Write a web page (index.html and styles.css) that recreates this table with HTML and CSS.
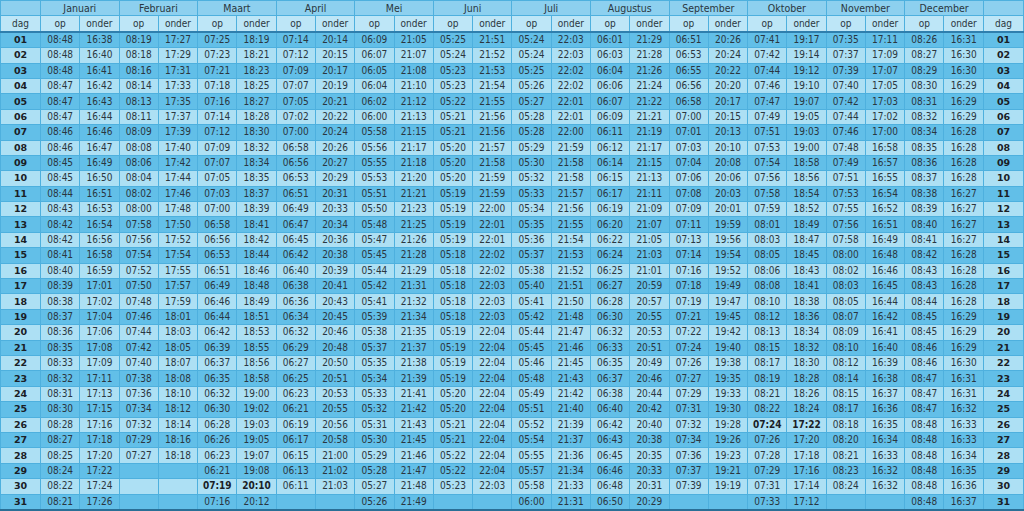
FILE: index.html
```html
<!DOCTYPE html>
<html lang="nl">
<head>
<meta charset="utf-8">
<title>Zonsopkomst en zonsondergang</title>
<link rel="stylesheet" href="styles.css">
</head>
<body>
<table class="sun">
<colgroup><col class="c-dag"><col span="24"><col class="c-dag"></colgroup>
<thead>
<tr class="months"><th></th><th colspan="2">Januari</th><th colspan="2">Februari</th><th colspan="2">Maart</th><th colspan="2">April</th><th colspan="2">Mei</th><th colspan="2">Juni</th><th colspan="2">Juli</th><th colspan="2">Augustus</th><th colspan="2">September</th><th colspan="2">Oktober</th><th colspan="2">November</th><th colspan="2">December</th><th></th></tr>
<tr class="sub"><th>dag</th><th>op</th><th>onder</th><th>op</th><th>onder</th><th>op</th><th>onder</th><th>op</th><th>onder</th><th>op</th><th>onder</th><th>op</th><th>onder</th><th>op</th><th>onder</th><th>op</th><th>onder</th><th>op</th><th>onder</th><th>op</th><th>onder</th><th>op</th><th>onder</th><th>op</th><th>onder</th><th>dag</th></tr>
</thead>
<tbody>
<tr><th>01</th><td>08:48</td><td>16:38</td><td>08:19</td><td>17:27</td><td>07:25</td><td>18:19</td><td>07:14</td><td>20:14</td><td>06:09</td><td>21:05</td><td>05:25</td><td>21:51</td><td>05:24</td><td>22:03</td><td>06:01</td><td>21:29</td><td>06:51</td><td>20:26</td><td>07:41</td><td>19:17</td><td>07:35</td><td>17:11</td><td>08:26</td><td>16:31</td><th>01</th></tr>
<tr><th>02</th><td>08:48</td><td>16:40</td><td>08:18</td><td>17:29</td><td>07:23</td><td>18:21</td><td>07:12</td><td>20:15</td><td>06:07</td><td>21:07</td><td>05:24</td><td>21:52</td><td>05:24</td><td>22:03</td><td>06:03</td><td>21:28</td><td>06:53</td><td>20:24</td><td>07:42</td><td>19:14</td><td>07:37</td><td>17:09</td><td>08:27</td><td>16:30</td><th>02</th></tr>
<tr><th>03</th><td>08:48</td><td>16:41</td><td>08:16</td><td>17:31</td><td>07:21</td><td>18:23</td><td>07:09</td><td>20:17</td><td>06:05</td><td>21:08</td><td>05:23</td><td>21:53</td><td>05:25</td><td>22:02</td><td>06:04</td><td>21:26</td><td>06:55</td><td>20:22</td><td>07:44</td><td>19:12</td><td>07:39</td><td>17:07</td><td>08:29</td><td>16:30</td><th>03</th></tr>
<tr><th>04</th><td>08:47</td><td>16:42</td><td>08:14</td><td>17:33</td><td>07:18</td><td>18:25</td><td>07:07</td><td>20:19</td><td>06:04</td><td>21:10</td><td>05:23</td><td>21:54</td><td>05:26</td><td>22:02</td><td>06:06</td><td>21:24</td><td>06:56</td><td>20:20</td><td>07:46</td><td>19:10</td><td>07:40</td><td>17:05</td><td>08:30</td><td>16:29</td><th>04</th></tr>
<tr><th>05</th><td>08:47</td><td>16:43</td><td>08:13</td><td>17:35</td><td>07:16</td><td>18:27</td><td>07:05</td><td>20:21</td><td>06:02</td><td>21:12</td><td>05:22</td><td>21:55</td><td>05:27</td><td>22:01</td><td>06:07</td><td>21:22</td><td>06:58</td><td>20:17</td><td>07:47</td><td>19:07</td><td>07:42</td><td>17:03</td><td>08:31</td><td>16:29</td><th>05</th></tr>
<tr><th>06</th><td>08:47</td><td>16:44</td><td>08:11</td><td>17:37</td><td>07:14</td><td>18:28</td><td>07:02</td><td>20:22</td><td>06:00</td><td>21:13</td><td>05:21</td><td>21:56</td><td>05:28</td><td>22:01</td><td>06:09</td><td>21:21</td><td>07:00</td><td>20:15</td><td>07:49</td><td>19:05</td><td>07:44</td><td>17:02</td><td>08:32</td><td>16:29</td><th>06</th></tr>
<tr><th>07</th><td>08:46</td><td>16:46</td><td>08:09</td><td>17:39</td><td>07:12</td><td>18:30</td><td>07:00</td><td>20:24</td><td>05:58</td><td>21:15</td><td>05:21</td><td>21:56</td><td>05:28</td><td>22:00</td><td>06:11</td><td>21:19</td><td>07:01</td><td>20:13</td><td>07:51</td><td>19:03</td><td>07:46</td><td>17:00</td><td>08:34</td><td>16:28</td><th>07</th></tr>
<tr><th>08</th><td>08:46</td><td>16:47</td><td>08:08</td><td>17:40</td><td>07:09</td><td>18:32</td><td>06:58</td><td>20:26</td><td>05:56</td><td>21:17</td><td>05:20</td><td>21:57</td><td>05:29</td><td>21:59</td><td>06:12</td><td>21:17</td><td>07:03</td><td>20:10</td><td>07:53</td><td>19:00</td><td>07:48</td><td>16:58</td><td>08:35</td><td>16:28</td><th>08</th></tr>
<tr><th>09</th><td>08:45</td><td>16:49</td><td>08:06</td><td>17:42</td><td>07:07</td><td>18:34</td><td>06:56</td><td>20:27</td><td>05:55</td><td>21:18</td><td>05:20</td><td>21:58</td><td>05:30</td><td>21:58</td><td>06:14</td><td>21:15</td><td>07:04</td><td>20:08</td><td>07:54</td><td>18:58</td><td>07:49</td><td>16:57</td><td>08:36</td><td>16:28</td><th>09</th></tr>
<tr><th>10</th><td>08:45</td><td>16:50</td><td>08:04</td><td>17:44</td><td>07:05</td><td>18:35</td><td>06:53</td><td>20:29</td><td>05:53</td><td>21:20</td><td>05:20</td><td>21:59</td><td>05:32</td><td>21:58</td><td>06:15</td><td>21:13</td><td>07:06</td><td>20:06</td><td>07:56</td><td>18:56</td><td>07:51</td><td>16:55</td><td>08:37</td><td>16:28</td><th>10</th></tr>
<tr><th>11</th><td>08:44</td><td>16:51</td><td>08:02</td><td>17:46</td><td>07:03</td><td>18:37</td><td>06:51</td><td>20:31</td><td>05:51</td><td>21:21</td><td>05:19</td><td>21:59</td><td>05:33</td><td>21:57</td><td>06:17</td><td>21:11</td><td>07:08</td><td>20:03</td><td>07:58</td><td>18:54</td><td>07:53</td><td>16:54</td><td>08:38</td><td>16:27</td><th>11</th></tr>
<tr><th>12</th><td>08:43</td><td>16:53</td><td>08:00</td><td>17:48</td><td>07:00</td><td>18:39</td><td>06:49</td><td>20:33</td><td>05:50</td><td>21:23</td><td>05:19</td><td>22:00</td><td>05:34</td><td>21:56</td><td>06:19</td><td>21:09</td><td>07:09</td><td>20:01</td><td>07:59</td><td>18:52</td><td>07:55</td><td>16:52</td><td>08:39</td><td>16:27</td><th>12</th></tr>
<tr><th>13</th><td>08:42</td><td>16:54</td><td>07:58</td><td>17:50</td><td>06:58</td><td>18:41</td><td>06:47</td><td>20:34</td><td>05:48</td><td>21:25</td><td>05:19</td><td>22:01</td><td>05:35</td><td>21:55</td><td>06:20</td><td>21:07</td><td>07:11</td><td>19:59</td><td>08:01</td><td>18:49</td><td>07:56</td><td>16:51</td><td>08:40</td><td>16:27</td><th>13</th></tr>
<tr><th>14</th><td>08:42</td><td>16:56</td><td>07:56</td><td>17:52</td><td>06:56</td><td>18:42</td><td>06:45</td><td>20:36</td><td>05:47</td><td>21:26</td><td>05:19</td><td>22:01</td><td>05:36</td><td>21:54</td><td>06:22</td><td>21:05</td><td>07:13</td><td>19:56</td><td>08:03</td><td>18:47</td><td>07:58</td><td>16:49</td><td>08:41</td><td>16:27</td><th>14</th></tr>
<tr><th>15</th><td>08:41</td><td>16:58</td><td>07:54</td><td>17:54</td><td>06:53</td><td>18:44</td><td>06:42</td><td>20:38</td><td>05:45</td><td>21:28</td><td>05:18</td><td>22:02</td><td>05:37</td><td>21:53</td><td>06:24</td><td>21:03</td><td>07:14</td><td>19:54</td><td>08:05</td><td>18:45</td><td>08:00</td><td>16:48</td><td>08:42</td><td>16:28</td><th>15</th></tr>
<tr><th>16</th><td>08:40</td><td>16:59</td><td>07:52</td><td>17:55</td><td>06:51</td><td>18:46</td><td>06:40</td><td>20:39</td><td>05:44</td><td>21:29</td><td>05:18</td><td>22:02</td><td>05:38</td><td>21:52</td><td>06:25</td><td>21:01</td><td>07:16</td><td>19:52</td><td>08:06</td><td>18:43</td><td>08:02</td><td>16:46</td><td>08:43</td><td>16:28</td><th>16</th></tr>
<tr><th>17</th><td>08:39</td><td>17:01</td><td>07:50</td><td>17:57</td><td>06:49</td><td>18:48</td><td>06:38</td><td>20:41</td><td>05:42</td><td>21:31</td><td>05:18</td><td>22:03</td><td>05:40</td><td>21:51</td><td>06:27</td><td>20:59</td><td>07:18</td><td>19:49</td><td>08:08</td><td>18:41</td><td>08:03</td><td>16:45</td><td>08:43</td><td>16:28</td><th>17</th></tr>
<tr><th>18</th><td>08:38</td><td>17:02</td><td>07:48</td><td>17:59</td><td>06:46</td><td>18:49</td><td>06:36</td><td>20:43</td><td>05:41</td><td>21:32</td><td>05:18</td><td>22:03</td><td>05:41</td><td>21:50</td><td>06:28</td><td>20:57</td><td>07:19</td><td>19:47</td><td>08:10</td><td>18:38</td><td>08:05</td><td>16:44</td><td>08:44</td><td>16:28</td><th>18</th></tr>
<tr><th>19</th><td>08:37</td><td>17:04</td><td>07:46</td><td>18:01</td><td>06:44</td><td>18:51</td><td>06:34</td><td>20:45</td><td>05:39</td><td>21:34</td><td>05:18</td><td>22:03</td><td>05:42</td><td>21:48</td><td>06:30</td><td>20:55</td><td>07:21</td><td>19:45</td><td>08:12</td><td>18:36</td><td>08:07</td><td>16:42</td><td>08:45</td><td>16:29</td><th>19</th></tr>
<tr><th>20</th><td>08:36</td><td>17:06</td><td>07:44</td><td>18:03</td><td>06:42</td><td>18:53</td><td>06:32</td><td>20:46</td><td>05:38</td><td>21:35</td><td>05:19</td><td>22:04</td><td>05:44</td><td>21:47</td><td>06:32</td><td>20:53</td><td>07:22</td><td>19:42</td><td>08:13</td><td>18:34</td><td>08:09</td><td>16:41</td><td>08:45</td><td>16:29</td><th>20</th></tr>
<tr><th>21</th><td>08:35</td><td>17:08</td><td>07:42</td><td>18:05</td><td>06:39</td><td>18:55</td><td>06:29</td><td>20:48</td><td>05:37</td><td>21:37</td><td>05:19</td><td>22:04</td><td>05:45</td><td>21:46</td><td>06:33</td><td>20:51</td><td>07:24</td><td>19:40</td><td>08:15</td><td>18:32</td><td>08:10</td><td>16:40</td><td>08:46</td><td>16:29</td><th>21</th></tr>
<tr><th>22</th><td>08:33</td><td>17:09</td><td>07:40</td><td>18:07</td><td>06:37</td><td>18:56</td><td>06:27</td><td>20:50</td><td>05:35</td><td>21:38</td><td>05:19</td><td>22:04</td><td>05:46</td><td>21:45</td><td>06:35</td><td>20:49</td><td>07:26</td><td>19:38</td><td>08:17</td><td>18:30</td><td>08:12</td><td>16:39</td><td>08:46</td><td>16:30</td><th>22</th></tr>
<tr><th>23</th><td>08:32</td><td>17:11</td><td>07:38</td><td>18:08</td><td>06:35</td><td>18:58</td><td>06:25</td><td>20:51</td><td>05:34</td><td>21:39</td><td>05:19</td><td>22:04</td><td>05:48</td><td>21:43</td><td>06:37</td><td>20:46</td><td>07:27</td><td>19:35</td><td>08:19</td><td>18:28</td><td>08:14</td><td>16:38</td><td>08:47</td><td>16:31</td><th>23</th></tr>
<tr><th>24</th><td>08:31</td><td>17:13</td><td>07:36</td><td>18:10</td><td>06:32</td><td>19:00</td><td>06:23</td><td>20:53</td><td>05:33</td><td>21:41</td><td>05:20</td><td>22:04</td><td>05:49</td><td>21:42</td><td>06:38</td><td>20:44</td><td>07:29</td><td>19:33</td><td>08:21</td><td>18:26</td><td>08:15</td><td>16:37</td><td>08:47</td><td>16:31</td><th>24</th></tr>
<tr><th>25</th><td>08:30</td><td>17:15</td><td>07:34</td><td>18:12</td><td>06:30</td><td>19:02</td><td>06:21</td><td>20:55</td><td>05:32</td><td>21:42</td><td>05:20</td><td>22:04</td><td>05:51</td><td>21:40</td><td>06:40</td><td>20:42</td><td>07:31</td><td>19:30</td><td>08:22</td><td>18:24</td><td>08:17</td><td>16:36</td><td>08:47</td><td>16:32</td><th>25</th></tr>
<tr><th>26</th><td>08:28</td><td>17:16</td><td>07:32</td><td>18:14</td><td>06:28</td><td>19:03</td><td>06:19</td><td>20:56</td><td>05:31</td><td>21:43</td><td>05:21</td><td>22:04</td><td>05:52</td><td>21:39</td><td>06:42</td><td>20:40</td><td>07:32</td><td>19:28</td><td class="b">07:24</td><td class="b">17:22</td><td>08:18</td><td>16:35</td><td>08:48</td><td>16:33</td><th>26</th></tr>
<tr><th>27</th><td>08:27</td><td>17:18</td><td>07:29</td><td>18:16</td><td>06:26</td><td>19:05</td><td>06:17</td><td>20:58</td><td>05:30</td><td>21:45</td><td>05:21</td><td>22:04</td><td>05:54</td><td>21:37</td><td>06:43</td><td>20:38</td><td>07:34</td><td>19:26</td><td>07:26</td><td>17:20</td><td>08:20</td><td>16:34</td><td>08:48</td><td>16:33</td><th>27</th></tr>
<tr><th>28</th><td>08:25</td><td>17:20</td><td>07:27</td><td>18:18</td><td>06:23</td><td>19:07</td><td>06:15</td><td>21:00</td><td>05:29</td><td>21:46</td><td>05:22</td><td>22:04</td><td>05:55</td><td>21:36</td><td>06:45</td><td>20:35</td><td>07:36</td><td>19:23</td><td>07:28</td><td>17:18</td><td>08:21</td><td>16:33</td><td>08:48</td><td>16:34</td><th>28</th></tr>
<tr><th>29</th><td>08:24</td><td>17:22</td><td></td><td></td><td>06:21</td><td>19:08</td><td>06:13</td><td>21:02</td><td>05:28</td><td>21:47</td><td>05:22</td><td>22:04</td><td>05:57</td><td>21:34</td><td>06:46</td><td>20:33</td><td>07:37</td><td>19:21</td><td>07:29</td><td>17:16</td><td>08:23</td><td>16:32</td><td>08:48</td><td>16:35</td><th>29</th></tr>
<tr><th>30</th><td>08:22</td><td>17:24</td><td></td><td></td><td class="b">07:19</td><td class="b">20:10</td><td>06:11</td><td>21:03</td><td>05:27</td><td>21:48</td><td>05:23</td><td>22:03</td><td>05:58</td><td>21:33</td><td>06:48</td><td>20:31</td><td>07:39</td><td>19:19</td><td>07:31</td><td>17:14</td><td>08:24</td><td>16:32</td><td>08:48</td><td>16:36</td><th>30</th></tr>
<tr><th>31</th><td>08:21</td><td>17:26</td><td></td><td></td><td>07:16</td><td>20:12</td><td></td><td></td><td>05:26</td><td>21:49</td><td></td><td></td><td>06:00</td><td>21:31</td><td>06:50</td><td>20:29</td><td></td><td></td><td>07:33</td><td>17:12</td><td></td><td></td><td>08:48</td><td>16:37</td><th>31</th></tr>
</tbody>
</table>
</body>
</html>
```
FILE: styles.css
```css
html, body {
  margin: 0;
  padding: 0;
  background: #7fcbec;
}
.sun {
  width: 1024px;
  border-collapse: collapse;
  table-layout: fixed;
  font-family: "DejaVu Sans Condensed", "DejaVu Sans", sans-serif;
  font-stretch: condensed;
  color: #2a3640;
  border-bottom: 2px solid #2a6f96;
}
.sun col.c-dag {
  width: 40px;
}
.sun th, .sun td {
  padding: 0;
  height: 14.4px;
  line-height: 14px;
  text-align: center;
  border: 1px solid #4eb0de;
  overflow: hidden;
  white-space: nowrap;
}
.sun td {
  font-size: 10px;
}
.months th {
  font-size: 10.5px;
  font-weight: normal;
  background: #8dd0ef;
}
.sub th {
  font-size: 10px;
  font-weight: normal;
  background: #bde6f7;
  border-bottom: 2px solid #2f7fae;
}
.sun tbody th {
  font-family: "DejaVu Sans", sans-serif;
  font-stretch: normal;
  font-size: 9.5px;
  font-weight: bold;
  color: #1a2026;
}
.sun tbody tr:nth-child(odd) td,
.sun tbody tr:nth-child(odd) th {
  background: #62bfe8;
}
.sun tbody tr:nth-child(even) td,
.sun tbody tr:nth-child(even) th {
  background: #ade0f4;
}
.sun td.b {
  font-weight: bold;
  color: #1a2026;
}
```
